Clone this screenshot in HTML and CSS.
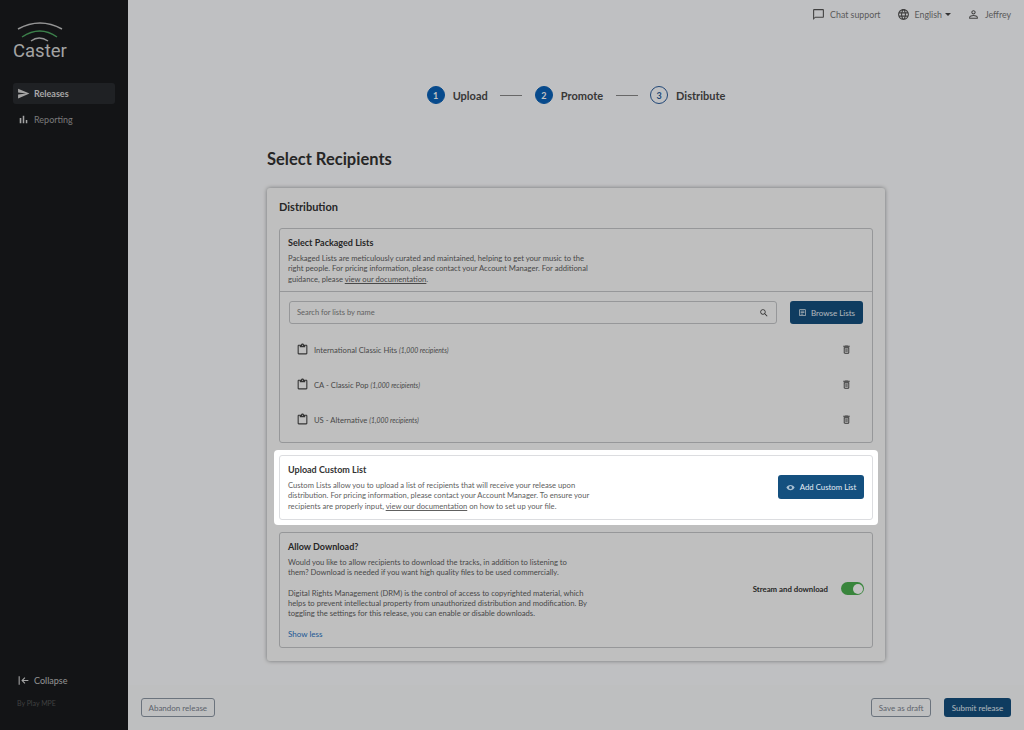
FILE: index.html
```html
<!DOCTYPE html>
<html lang="en">
<head>
    <meta charset="UTF-8">
    <meta name="viewport" content="width=device-width, initial-scale=1.0">
    <title>Caster - Select Recipients</title>
    <link rel="stylesheet" href="styles.css">
</head>
<body>
    <div class="app">
        <aside class="sidebar">
            <div class="logo">
                <svg class="logo-arcs" width="54" height="24" viewBox="0 0 54 24" fill="none">
                    <path d="M5 9Q27 -3 49 9" stroke="#c4c4c4" stroke-width="1.500"/>
                    <path d="M9 17Q27 5 44 17" stroke="#4fa862" stroke-width="1.500"/>
                    <path d="M18 21Q26 15 35 21" stroke="#c4c4c4" stroke-width="1.500"/>
                </svg>
                <div class="logo-name">Caster</div>
            </div>
            <nav class="nav">
                <a class="nav-item active">
                    <svg class="nav-icon" viewBox="0 0 24 24"><path d="M2.01 21L23 12 2.01 3 2 10l15 2-15 2z"/></svg>
                    Releases
                </a>
                <a class="nav-item">
                    <svg class="nav-icon" viewBox="0 0 24 24"><path d="M5 9.2h3V19H5zM10.6 5h2.8v14h-2.8zm5.6 8H19v6h-2.8z"/></svg>
                    Reporting
                </a>
            </nav>
            <div class="sidebar-bottom">
                <a class="collapse">
                    <svg class="nav-icon" viewBox="0 0 24 24"><path d="M3 4h2v16H3zM21 11H11.8l3.6-3.6L14 6l-6 6 6 6 1.4-1.4-3.6-3.6H21z"/></svg>
                    Collapse
                </a>
                <div class="by-line">By Play MPE</div>
            </div>
        </aside>

        <div class="main">
            <header class="topbar">
                <a class="top-link">
                    <svg class="top-icon" viewBox="0 0 24 24"><path d="M20 2H4c-1.1 0-2 .9-2 2v18l4-4h14c1.1 0 2-.9 2-2V4c0-1.1-.9-2-2-2zm0 14H6l-2 2V4h16v12z"/></svg>
                    Chat support
                </a>
                <a class="top-link">
                    <svg class="top-icon" viewBox="0 0 24 24"><path d="M11.99 2C6.47 2 2 6.48 2 12s4.47 10 9.99 10C17.52 22 22 17.52 22 12S17.52 2 11.99 2zm6.93 6h-2.95c-.32-1.25-.78-2.45-1.38-3.56 1.84.63 3.37 1.91 4.33 3.56zM12 4.04c.83 1.2 1.48 2.53 1.91 3.96h-3.82c.43-1.43 1.08-2.76 1.91-3.96zM4.26 14C4.1 13.36 4 12.69 4 12s.1-1.36.26-2h3.38c-.08.66-.14 1.32-.14 2 0 .68.06 1.34.14 2H4.26zm.82 2h2.95c.32 1.25.78 2.45 1.38 3.56-1.84-.63-3.37-1.9-4.33-3.56zm2.95-8H5.08c.96-1.66 2.49-2.93 4.33-3.56C8.81 5.55 8.35 6.75 8.03 8zM12 19.96c-.83-1.2-1.48-2.53-1.91-3.96h3.82c-.43 1.43-1.08 2.76-1.91 3.96zM14.34 14H9.66c-.09-.66-.16-1.32-.16-2 0-.68.07-1.35.16-2h4.68c.09.65.16 1.32.16 2 0 .68-.07 1.34-.16 2zm.25 5.56c.6-1.11 1.06-2.31 1.38-3.56h2.95c-.96 1.65-2.49 2.93-4.33 3.56zM16.36 14c.08-.66.14-1.32.14-2 0-.68-.06-1.34-.14-2h3.38c.16.64.26 1.31.26 2s-.1 1.36-.26 2h-3.38z"/></svg>
                    English
                    <span class="caret"></span>
                </a>
                <a class="top-link">
                    <svg class="top-icon" viewBox="0 0 24 24"><path d="M12 5.9c1.16 0 2.1.94 2.1 2.1s-.94 2.1-2.1 2.1S9.9 9.16 9.9 8s.94-2.1 2.1-2.1m0 9c2.97 0 6.1 1.46 6.1 2.1v1.1H5.9V17c0-.64 3.13-2.1 6.1-2.1M12 4C9.79 4 8 5.79 8 8s1.79 4 4 4 4-1.79 4-4-1.79-4-4-4zm0 9c-2.67 0-8 1.34-8 4v3h16v-3c0-2.66-5.33-4-8-4z"/></svg>
                    Jeffrey
                </a>
            </header>

            <div class="content">
                <div class="stepper">
                    <div class="step"><span class="step-num">1</span>Upload</div>
                    <span class="step-line"></span>
                    <div class="step"><span class="step-num">2</span>Promote</div>
                    <span class="step-line"></span>
                    <div class="step"><span class="step-num todo">3</span>Distribute</div>
                </div>

                <div class="page">
                    <h1 class="page-title">Select Recipients</h1>
                    <div class="card">
                        <h2 class="card-title">Distribution</h2>

                        <section class="panel">
                            <div class="panel-head">
                                <h3>Select Packaged Lists</h3>
                                <p>Packaged Lists are meticulously curated and maintained, helping to get your music to the right people. For pricing information, please contact your Account Manager. For additional guidance, please <u>view our documentation</u>.</p>
                            </div>
                            <div class="panel-body">
                                <div class="search-row">
                                    <div class="search">
                                        <span>Search for lists by name</span>
                                        <svg class="search-icon" viewBox="0 0 24 24"><path d="M15.5 14h-.79l-.28-.27C15.41 12.59 16 11.11 16 9.5 16 5.91 13.09 3 9.5 3S3 5.91 3 9.5 5.91 16 9.5 16c1.61 0 3.09-.59 4.23-1.57l.27.28v.79l5 4.99L20.49 19l-4.99-5zm-6 0C7.01 14 5 11.99 5 9.5S7.01 5 9.5 5 14 7.01 14 9.5 11.99 14 9.5 14z"/></svg>
                                    </div>
                                    <button class="btn-primary btn-browse">
                                        <svg class="btn-icon" viewBox="0 0 24 24"><path d="M19 3H5c-1.1 0-2 .9-2 2v14c0 1.1.9 2 2 2h14c1.100 0 2-.9 2-2V5c0-1.100-.9-2-2-2zm0 16H5V5h14v14zM7 7h10v2H7zm0 4h10v2H7zm0 4h7v2H7z"/></svg>
                                        Browse Lists
                                    </button>
                                </div>
                                <ul class="lists">
                                    <li class="list-row">
                                        <svg class="clip-icon" viewBox="0 0 24 24"><path d="M19 3h-4.18C14.4 1.84 13.3 1 12 1s-2.4.84-2.82 2H5c-1.1 0-2 .9-2 2v14c0 1.1.9 2 2 2h14c1.100 0 2-.9 2-2V5c0-1.100-.9-2-2-2zm-7 0c.55 0 1 .45 1 1s-.45 1-1 1-1-.45-1-1 .45-1 1-1zm7 16H5V5h2v3h10V5h2v14z"/></svg>
                                        <span class="list-name">International Classic Hits <em>(1,000 recipients)</em></span>
                                        <svg class="trash-icon" viewBox="0 0 24 24"><path d="M6 19c0 1.100.9 2 2 2h8c1.100 0 2-.9 2-2V7H6v12zM8 9h8v10H8V9zm7.500-5l-1-1h-5l-1 1H5v2h14V4zM10 10.500h1.500v7H10zm2.500 0H14v7h-1.500z"/></svg>
                                    </li>
                                    <li class="list-row">
                                        <svg class="clip-icon" viewBox="0 0 24 24"><path d="M19 3h-4.18C14.4 1.84 13.3 1 12 1s-2.4.84-2.82 2H5c-1.1 0-2 .9-2 2v14c0 1.1.9 2 2 2h14c1.100 0 2-.9 2-2V5c0-1.100-.9-2-2-2zm-7 0c.55 0 1 .45 1 1s-.45 1-1 1-1-.45-1-1 .45-1 1-1zm7 16H5V5h2v3h10V5h2v14z"/></svg>
                                        <span class="list-name">CA - Classic Pop <em>(1,000 recipients)</em></span>
                                        <svg class="trash-icon" viewBox="0 0 24 24"><path d="M6 19c0 1.100.9 2 2 2h8c1.100 0 2-.9 2-2V7H6v12zM8 9h8v10H8V9zm7.500-5l-1-1h-5l-1 1H5v2h14V4zM10 10.500h1.500v7H10zm2.500 0H14v7h-1.500z"/></svg>
                                    </li>
                                    <li class="list-row">
                                        <svg class="clip-icon" viewBox="0 0 24 24"><path d="M19 3h-4.18C14.4 1.84 13.3 1 12 1s-2.4.84-2.82 2H5c-1.1 0-2 .9-2 2v14c0 1.1.9 2 2 2h14c1.100 0 2-.9 2-2V5c0-1.100-.9-2-2-2zm-7 0c.55 0 1 .45 1 1s-.45 1-1 1-1-.45-1-1 .45-1 1-1zm7 16H5V5h2v3h10V5h2v14z"/></svg>
                                        <span class="list-name">US - Alternative <em>(1,000 recipients)</em></span>
                                        <svg class="trash-icon" viewBox="0 0 24 24"><path d="M6 19c0 1.100.9 2 2 2h8c1.100 0 2-.9 2-2V7H6v12zM8 9h8v10H8V9zm7.500-5l-1-1h-5l-1 1H5v2h14V4zM10 10.500h1.500v7H10zm2.500 0H14v7h-1.500z"/></svg>
                                    </li>
                                </ul>
                            </div>
                        </section>

                        <div class="spotlight">
                            <section class="panel panel-row">
                                <div class="panel-text panel-text-wide">
                                    <h3>Upload Custom List</h3>
                                    <p>Custom Lists allow you to upload a list of recipients that will receive your release upon distribution. For pricing information, please contact your Account Manager. To ensure your recipients are properly input, <u>view our documentation</u> on how to set up your file.</p>
                                </div>
                                <button class="btn-primary btn-add">
                                    <svg class="btn-icon btn-icon-dim" viewBox="0 0 24 24"><path d="M12 5C7 5 3 8 1 12c2 4 6 7 11 7s9-3 11-7c-2-4-6-7-11-7zm0 11a4 4 0 110-8 4 4 0 010 8z"/></svg>
                                    Add Custom List
                                </button>
                            </section>
                        </div>

                        <section class="panel panel-row panel-download">
                            <div class="panel-text">
                                <h3>Allow Download?</h3>
                                <p>Would you like to allow recipients to download the tracks, in addition to listening to them? Download is needed if you want high quality files to be used commercially.</p>
                                <p class="gap">Digital Rights Management (DRM) is the control of access to copyrighted material, which helps to prevent intellectual property from unauthorized distribution and modification. By toggling the settings for this release, you can enable or disable downloads.</p>
                                <a class="show-less">Show less</a>
                            </div>
                            <div class="toggle-wrap">
                                <span class="toggle-label">Stream and download</span>
                                <span class="toggle"><span class="toggle-knob"></span></span>
                            </div>
                        </section>
                    </div>
                </div>
            </div>

            <footer class="footer">
                <button class="btn-outline">Abandon release</button>
                <div class="footer-right">
                    <button class="btn-outline">Save as draft</button>
                    <button class="btn-primary btn-submit">Submit release</button>
                </div>
            </footer>
        </div>
    </div>
    <div class="overlay"></div>
</body>
</html>
```

FILE: styles.css
```css
body {
    margin: 0;
    font-family: 'Lato', 'Open Sans', sans-serif;
    color: #3a3b3d;
    background: #fff;
}

h1, h2, h3, p, ul {
    margin: 0;
    padding: 0;
}

.app {
    display: flex;
    height: 730px;
    overflow: hidden;
}

.overlay {
    position: fixed;
    top: 0;
    left: 0;
    right: 0;
    bottom: 0;
    background: rgba(0, 0, 0, 0.24);
    z-index: 10;
}

/* sidebar */
.sidebar {
    width: 128px;
    flex-shrink: 0;
    background: #191b1e;
    display: flex;
    flex-direction: column;
    box-sizing: border-box;
    padding: 20px 13px 23px;
    color: #c8c8c8;
}

.logo {
    height: 63px;
}

.logo-arcs {
    display: block;
}

.logo-name {
    font-family: 'Roboto', sans-serif;
    font-size: 18.500px;
    line-height: 15px;
    color: #d6d6d6;
}

.nav {
    display: flex;
    flex-direction: column;
    gap: 5px;
}

.nav-item {
    display: flex;
    align-items: center;
    gap: 4px;
    height: 21px;
    padding-left: 4px;
    border-radius: 3px;
    font-size: 9px;
    color: #a0a0a0;
}

.nav-item.active {
    background: #2a2c30;
    color: #ddd;
    font-weight: 700;
}

.nav-icon {
    width: 13px;
    height: 13px;
    fill: #d8d8d8;
}

.sidebar-bottom {
    margin-top: auto;
    padding-left: 4px;
}

.collapse {
    display: flex;
    align-items: center;
    gap: 4px;
    font-size: 9px;
    color: #c0c0c0;
    margin-bottom: 1px;
}

.by-line {
    margin-top: 12px;
    font-size: 7px;
    color: #555;
}

/* main */
.main {
    flex: 1;
    display: flex;
    flex-direction: column;
    min-width: 0;
    background: #fcfdff;
}

.topbar {
    display: flex;
    justify-content: flex-end;
    align-items: center;
    gap: 16px;
    height: 30px;
    padding: 0 13px 1px 0;
    box-sizing: border-box;
    flex-shrink: 0;
}

.top-link {
    display: flex;
    align-items: center;
    gap: 5px;
    font-size: 8.800px;
    color: #777;
}

.top-icon {
    width: 13px;
    height: 13px;
    fill: #555;
}

.caret {
    width: 0;
    height: 0;
    margin-left: -2px;
    border-left: 3px solid transparent;
    border-right: 3px solid transparent;
    border-top: 3px solid #444;
}

.content {
    flex: 1;
    min-height: 0;
}

.stepper {
    display: flex;
    justify-content: center;
    align-items: center;
    gap: 12.500px;
    margin-top: 56px;
    height: 18px;
}

.step {
    display: flex;
    align-items: center;
    gap: 8px;
    font-size: 11px;
    font-weight: 700;
    color: #4a4a4a;
}

.step-num {
    display: flex;
    align-items: center;
    justify-content: center;
    width: 18px;
    height: 18px;
    border-radius: 50%;
    background: #0a62b8;
    border: 1px solid #0a62b8;
    box-sizing: border-box;
    color: #fff;
    font-size: 9px;
}

.step-num.todo {
    background: transparent;
    border-color: #2b5d9c;
    color: #2b5d9c;
}

.step-line {
    width: 22px;
    height: 1px;
    background: #888;
}

.page {
    width: 618px;
    margin: 0 auto;
}

.page-title {
    margin-top: 45px;
    font-size: 16.500px;
    line-height: 20px;
    font-weight: 700;
    color: #333;
}

.card {
    margin-top: 19px;
    padding: 12px 12px 12px;
    height: 473px;
    box-sizing: border-box;
    background: #fcfcfc;
    border-radius: 3px;
    box-shadow: 0 0 4px rgba(0, 0, 0, 0.4);
}

.card-title {
    font-size: 11px;
    line-height: 14px;
    font-weight: 700;
    color: #333;
}

.panel {
    margin-top: 14px;
    border: 1px solid #c5c7c9;
    border-radius: 3px;
}

.panel h3 {
    font-size: 9px;
    line-height: 12px;
    font-weight: 700;
    color: #333;
    margin-bottom: 4px;
}

.panel p {
    font-size: 7.650px;
    line-height: 10.300px;
    color: #606060;
}

.panel p.gap {
    margin-top: 10px;
}

.panel-head {
    padding: 8px 284px 7px 8px;
    height: 63px;
    box-sizing: border-box;
    border-bottom: 1px solid #c5c7c9;
}

.panel-body {
    padding: 9px 9px 5px;
}

.search-row {
    display: flex;
    gap: 13px;
}

.search {
    flex: 1;
    display: flex;
    align-items: center;
    justify-content: space-between;
    height: 23px;
    box-sizing: border-box;
    padding: 0 7px;
    border: 1px solid #c5c7c9;
    border-radius: 3px;
    font-size: 7.500px;
    color: #808080;
}

.search-icon {
    width: 10px;
    height: 10px;
    fill: #444;
}

.btn-primary {
    display: flex;
    align-items: center;
    justify-content: center;
    gap: 4px;
    border: none;
    border-radius: 3px;
    background: #14507f;
    color: #e6eef5;
    font-family: inherit;
    font-size: 8px;
    padding: 0;
}

.btn-browse {
    width: 73px;
    height: 23px;
}

.btn-icon {
    width: 9px;
    height: 9px;
    fill: currentColor;
}

.btn-icon-dim {
    opacity: 0.7;
}

.lists {
    list-style: none;
    margin-top: 8px;
}

.list-row {
    display: flex;
    align-items: center;
    height: 35px;
    padding: 0 11px 0 7px;
}

.clip-icon {
    width: 13px;
    height: 13px;
    fill: #444;
    margin-right: 5px;
}

.list-name {
    flex: 1;
    font-size: 7.650px;
    color: #606060;
}

.list-name em {
    font-size: 6.800px;
}

.trash-icon {
    width: 11px;
    height: 11px;
    fill: #444;
}

/* highlighted custom list box */
.spotlight {
    position: relative;
    z-index: 20;
    margin: 7px -5px 0;
    padding: 5px;
    background: #fff;
    border-radius: 4px;
}

.spotlight .panel {
    margin-top: 0;
    border-color: #dcdde0;
}

.panel-row {
    display: flex;
    align-items: center;
    justify-content: space-between;
    padding: 8px 8px 8px;
}

.panel-text {
    width: 300px;
}

.panel-text-wide {
    width: 304px;
}

.btn-add {
    width: 86px;
    height: 24px;
    gap: 5px;
    font-size: 7.800px;
}

.panel-download {
    margin-top: 7px;
    height: 116px;
    box-sizing: border-box;
}

.show-less {
    display: block;
    margin-top: 10px;
    font-size: 8px;
    color: #2a74c4;
}

.toggle-wrap {
    display: flex;
    align-items: center;
    gap: 13px;
    padding-bottom: 2px;
}

.toggle-label {
    font-size: 7.800px;
    font-weight: 700;
    color: #333;
}

.toggle {
    display: flex;
    justify-content: flex-end;
    align-items: center;
    width: 23px;
    height: 13px;
    padding: 0 1.500px;
    box-sizing: border-box;
    border-radius: 7px;
    background: #4caf50;
}

.toggle-knob {
    width: 10px;
    height: 10px;
    border-radius: 50%;
    background: #fff;
}

.footer {
    display: flex;
    justify-content: space-between;
    align-items: center;
    height: 45px;
    flex-shrink: 0;
    box-sizing: border-box;
    padding: 0 13px;
    background: #fafbfd;
}

.footer-right {
    display: flex;
    gap: 13px;
}

.btn-outline {
    height: 19px;
    padding: 0 6.500px;
    border: 1px solid #8d98a5;
    border-radius: 3px;
    background: transparent;
    color: #7a838e;
    font-family: inherit;
    font-size: 8px;
}

.btn-submit {
    width: 67px;
    height: 19px;
}
```
